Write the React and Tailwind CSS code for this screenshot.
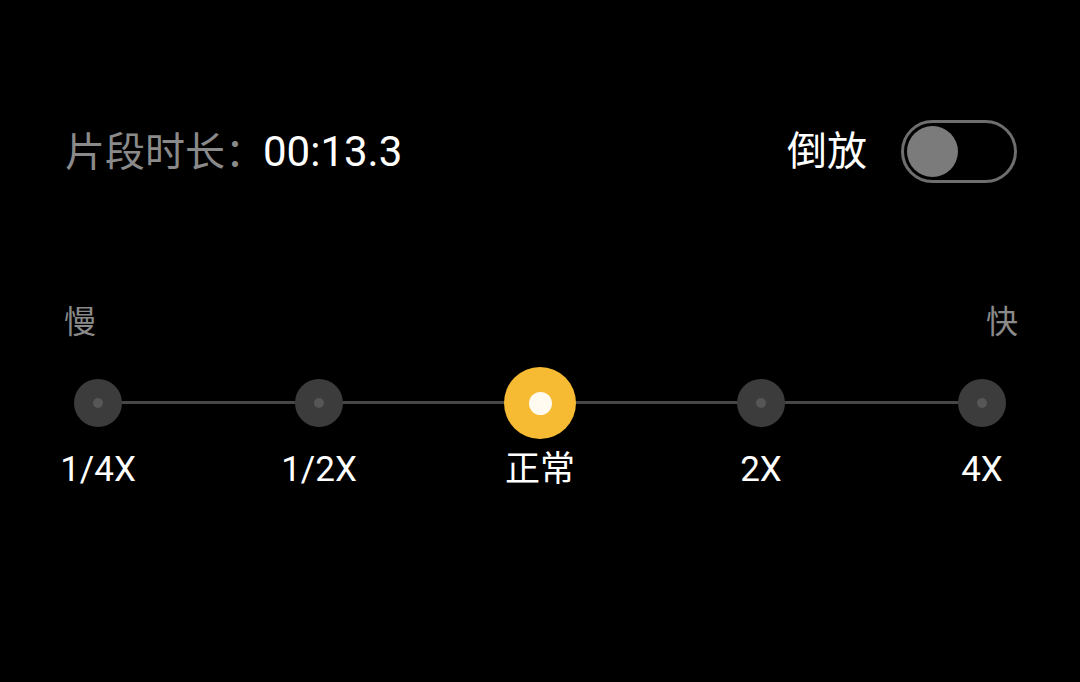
import React from 'react';

const speeds = ['1/4X', '1/2X', '正常', '2X', '4X'];
const active = 2;

const font = { fontFamily: "Roboto, 'Noto Sans CJK SC', sans-serif" };

export default function App() {
  return (
    <div className="w-[1080px] h-[682px] bg-black overflow-hidden" style={font}>
      {/* top row */}
      <div className="flex items-center justify-between pl-[65px] pr-[63px] pt-[120px]">
        <div className="flex items-baseline leading-none">
          <span className="text-[#8a8a8a] text-[40px]">片段时长：</span>
          <span className="text-white text-[42px] -ml-[2px]">00:13.3</span>
        </div>
        <div className="flex items-center gap-[34px]">
          <span className="text-white text-[40px] leading-none">倒放</span>
          <div className="w-[116px] h-[63px] rounded-full border-[3px] border-[#6e6e6e] flex items-center pl-[3px]">
            <div className="w-[51px] h-[51px] rounded-full bg-[#7b7b7b]" />
          </div>
        </div>
      </div>

      {/* slow / fast */}
      <div className="flex justify-between pl-[64px] pr-[62px] mt-[123px] text-[#8a8a8a] text-[32px] leading-none">
        <span>慢</span>
        <span>快</span>
      </div>

      {/* slider */}
      <div className="relative mx-[58px] mt-[29px]">
        <div className="absolute left-[40px] right-[40px] top-[34px] h-[3px] bg-[#474747]" />
        <div className="relative flex justify-between">
          {speeds.map((s, i) => (
            <div key={s} className="w-[80px] flex flex-col items-center">
              <div className="h-[72px] flex items-center justify-center">
                {i === active ? (
                  <div className="w-[72px] h-[72px] rounded-full bg-[#f6bb32] flex items-center justify-center">
                    <div className="w-[23px] h-[23px] rounded-full bg-[#fffbf0]" />
                  </div>
                ) : (
                  <div className="w-[48px] h-[48px] rounded-full bg-[#3c3c3c] flex items-center justify-center">
                    <div className="w-[10px] h-[10px] rounded-full bg-[#565656]" />
                  </div>
                )}
              </div>
              <span className="mt-[13px] text-white text-[35px] leading-none whitespace-nowrap">{s}</span>
            </div>
          ))}
        </div>
      </div>
    </div>
  );
}
